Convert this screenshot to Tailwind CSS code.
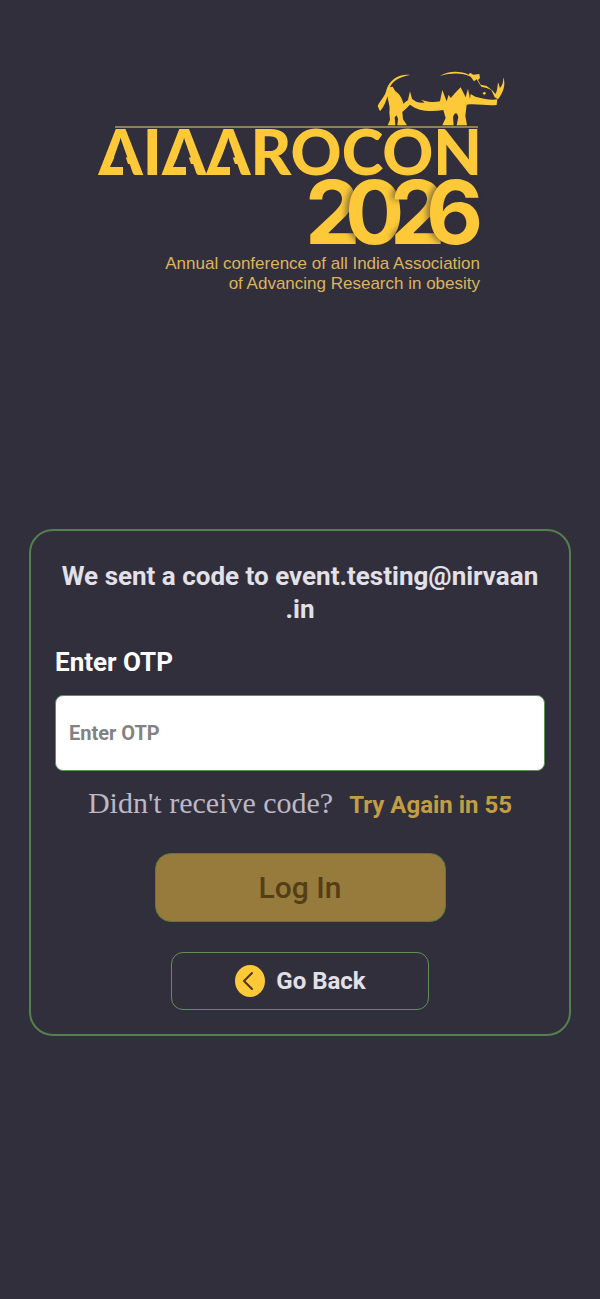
<!DOCTYPE html>
<html lang="en">
  <head>
    <meta charset="UTF-8" />
    <meta name="viewport" content="width=device-width, initial-scale=1.0" />
    <title>AIAAROCON 2026</title>
    <script src="https://cdn.jsdelivr.net/npm/@tailwindcss/browser@4"></script>
  </head>
  <body class="min-h-screen bg-[#322f3c] font-['Roboto',sans-serif]">
    <main class="flex flex-col items-center px-[29px] pt-16 pb-12">
      <!-- Logo -->
      <svg
        class="w-full max-w-[420px]"
        viewBox="90 64 420 236"
        role="img"
        aria-label="AIAAROCON 2026"
      >
        <!-- Rhino -->
        <g transform="translate(360 60) scale(0.3333)" fill="#fdc938">
          <path
            d="M150 45C118 41 88 60 80 88C76 110 60 122 53 138L60 154C72 140 78 124 83 108C84 128 92 140 88 156L90 180L83 196H106L104 172L110 166L114 176L112 196H141L129 178L127 156C136 148 144 140 150 134C176 154 210 156 250 150L257 174L247 196H281L279 172C284 156 292 156 295 172L290 196H321L316 168L320 134C350 130 380 138 410 135L412 118C390 122 366 114 346 110L332 102L330 116L324 86L317 112L302 82L288 96L272 114L266 104L260 124L247 90L240 124C222 128 204 126 184 120L194 128C176 130 164 124 156 116L150 94L144 120L130 131C126 112 116 100 106 94L98 80L90 82C98 62 120 50 150 45Z"
          />
          <path
            d="M240 48C266 32 300 32 326 44L330 38L340 44L358 42L360 54L354 60L362 74L380 78L398 92L406 102C412 94 412 82 414 66L420 84C428 76 430 66 430 52C438 74 430 98 414 118L404 112L394 90L380 84L364 80L356 68L350 58L342 64L332 50C306 38 276 38 240 48Z"
          />
          <circle cx="373" cy="100" r="4" />
        </g>
        <path d="M115 127H478" stroke="#8f7f5c" stroke-width="2" />
        <text
          x="482"
          y="175"
          text-anchor="end"
          fill="#fdc938"
          class="font-['Lato',sans-serif] text-[63px] font-black"
        >AIAAROCON</text>
        <!-- Notches cut into the crossbars -->
        <defs>
          <g id="notch">
            <path d="M0 143L8 167H-11Z" fill="#322f3c" />
            <path d="M-16 167H2V175H-19Z" fill="#fdc938" />
          </g>
        </defs>
        <use href="#notch" x="121" />
        <use href="#notch" x="184" />
        <use href="#notch" x="228" />
        <g
          fill="#fdc938"
          class="font-['Inter',sans-serif] text-[88px] font-bold"
        >
          <text x="305" y="244">2</text>
          <text x="345" y="244" class="drop-shadow-[-3px_0_3px_#322f3c99]">0</text>
          <text x="390" y="244" class="drop-shadow-[-3px_0_3px_#322f3c99]">2</text>
          <text x="426" y="244" class="drop-shadow-[-3px_0_3px_#322f3c99]">6</text>
        </g>
        <g
          fill="#dcb45c"
          text-anchor="end"
          class="font-['Liberation_Sans',sans-serif] text-[17px]"
        >
          <text x="480" y="269">Annual conference of all India Association</text>
          <text x="480" y="289">of Advancing Research in obesity</text>
        </g>
      </svg>

      <!-- OTP form -->
      <form
        class="mt-[229px] flex w-full flex-col items-center rounded-3xl border-2 border-[#54804f] px-6 pt-[29px] pb-6"
      >
        <p class="text-center text-[26px] leading-[33px] font-bold text-[#e2e0e8]">
          We sent a code to event.testing@nirvaan<br />.in
        </p>
        <label
          for="otp"
          class="mt-5 w-full text-[26px] leading-8 font-bold text-white"
        >
          Enter OTP
        </label>
        <input
          id="otp"
          type="text"
          inputmode="numeric"
          placeholder="Enter OTP"
          class="mt-[17px] h-[76px] w-full rounded-lg border border-[#5f9058] bg-white px-[13px] text-xl font-bold text-[#322f3c] outline-none placeholder:text-[#828282]"
        />
        <p class="mt-4 flex items-baseline gap-4 leading-8">
          <span class="font-['Liberation_Serif',serif] text-[30px] text-[#bcb8c6]">Didn't receive code?</span>
          <span class="text-2xl font-bold text-[#c19d44]">Try Again in 55</span>
        </p>
        <button
          type="submit"
          disabled
          class="mt-8 h-[69px] w-[291px] rounded-2xl border border-[#5c7a3c] bg-[#977b3d] text-[30px] font-medium text-[#553d15]"
        >
          Log In
        </button>
        <button
          type="button"
          class="mt-[30px] flex h-[58px] w-[258px] items-center justify-center gap-[10px] rounded-xl border border-[#5f9058] text-2xl font-bold text-[#e2e0e8]"
        >
          <svg class="size-8" viewBox="0 0 32 32" fill="none">
            <ellipse cx="16" cy="16" rx="15" ry="16" fill="#fdc938" />
            <path
              d="M18 8L10 16L18 24"
              stroke="#4a3518"
              stroke-width="2"
              stroke-linecap="round"
              stroke-linejoin="round"
            />
          </svg>
          Go Back
        </button>
      </form>
    </main>
  </body>
</html>
